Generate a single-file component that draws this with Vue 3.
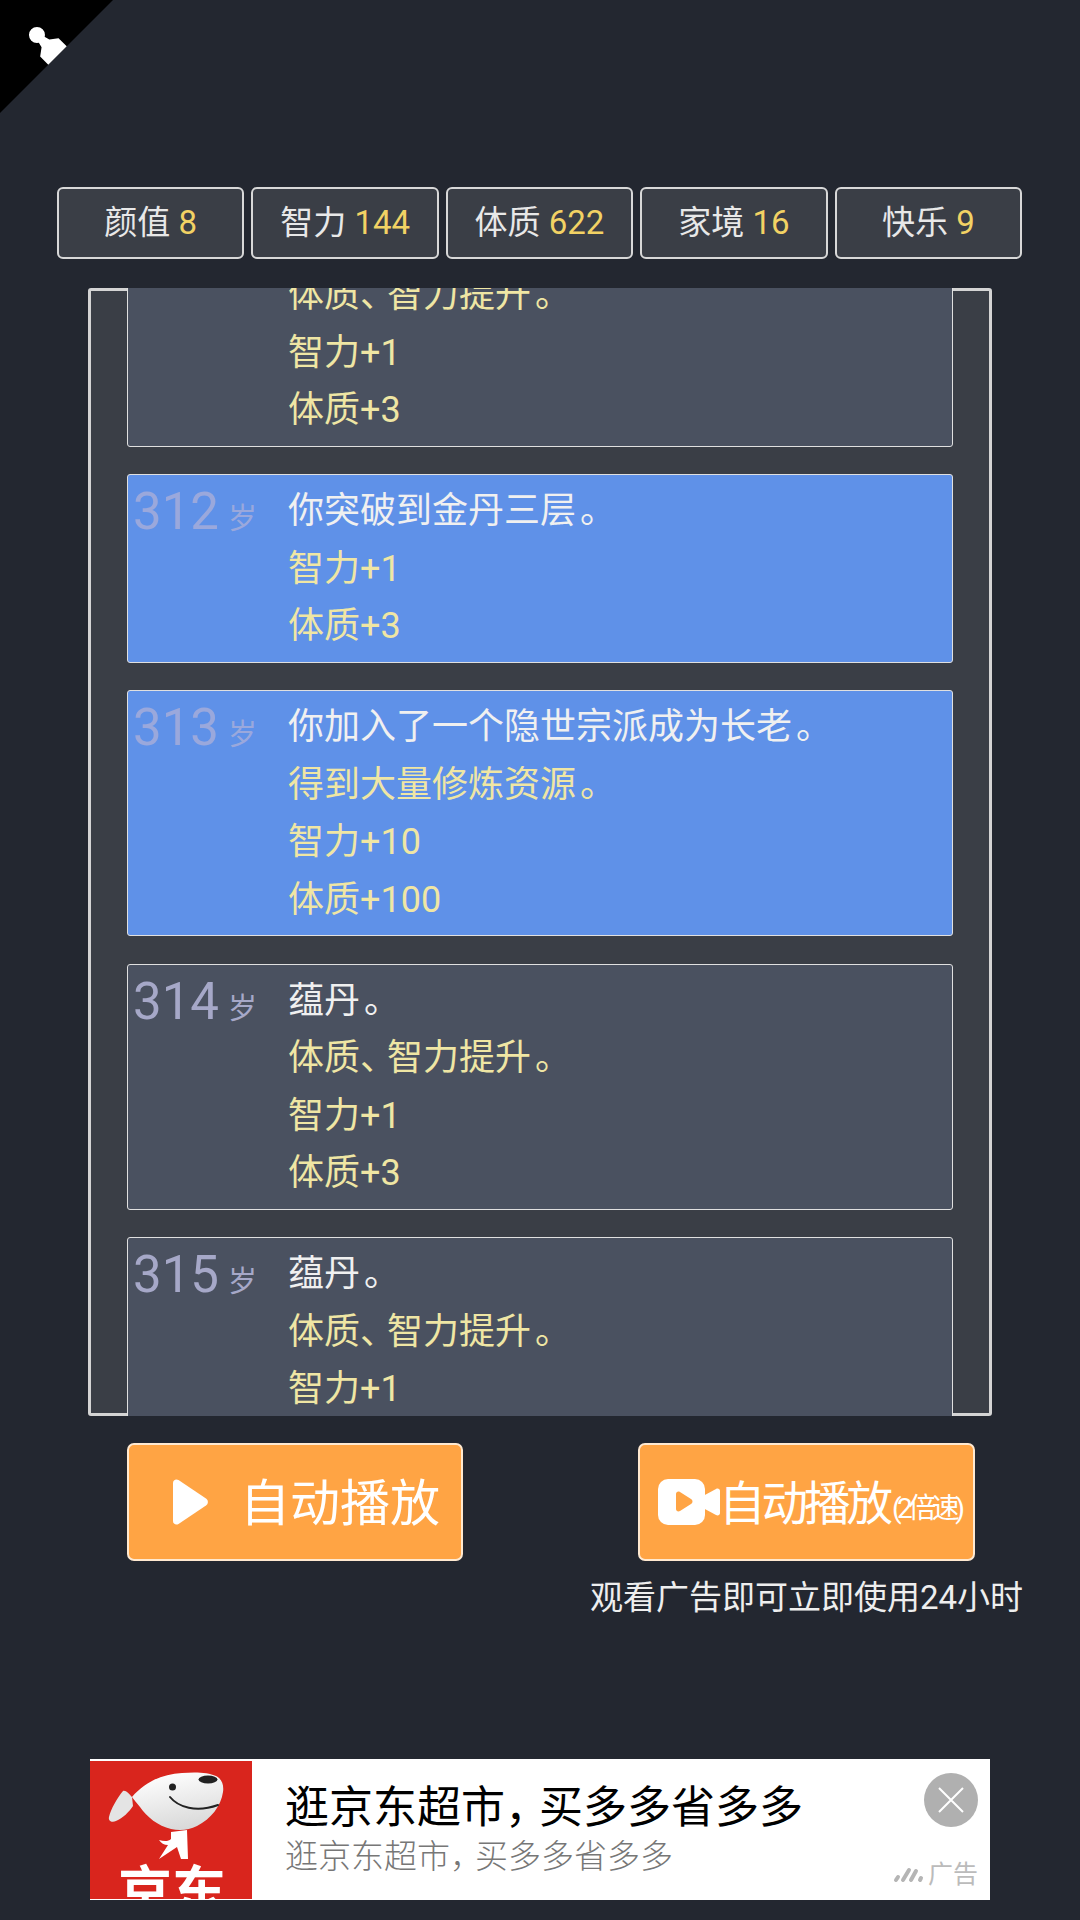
<template>
  <div class="page">
    <div class="corner">
      <svg class="pawn" width="50" height="50" viewBox="0 0 50 50">
        <g transform="rotate(-45 25 25)" fill="#fff">
          <circle cx="25" cy="8" r="8" />
          <path d="M21 14h8l1.500 6 7.500 5.500V37a1 1 0 0 1-1 1H13a1 1 0 0 1-1-1V25.500l7.500-5.500z" />
        </g>
      </svg>
    </div>

    <div class="stats">
      <div v-for="stat in stats" :key="stat.name" class="stat">
        {{ stat.name }} <span class="stat-value">{{ stat.value }}</span>
      </div>
    </div>

    <div class="panel">
      <div class="scroller">
        <div class="list">
          <div v-for="item in events" :key="item.age" class="card" :class="{ active: item.active }">
            <div class="age"><span class="age-num">{{ item.age }}</span><span class="age-unit">岁</span></div>
            <div class="lines">
              <div class="title">
                <span v-for="(part, i) in splitPunct(item.title)" :key="i" :class="part.cls">{{ part.text }}</span>
              </div>
              <div v-for="line in item.lines" :key="line" class="effect">
                <span v-for="(part, i) in splitPunct(line)" :key="i" :class="part.cls">{{ part.text }}</span>
              </div>
            </div>
          </div>
        </div>
      </div>
    </div>

    <div class="actions">
      <div class="btn btn-play">
        <svg width="38" height="48" viewBox="0 0 38 48">
          <path d="M2 5c0-3 3-4.500 5.500-3L35 20.500c2.500 1.700 2.500 5.300 0 7L7.500 46C5 47.500 2 46 2 43z" fill="#fff" />
        </svg>
        <span class="play-text">自动播放</span>
      </div>
      <div class="btn btn-video">
        <svg width="62" height="46" viewBox="0 0 62 46">
          <rect x="0" y="0" width="47" height="46" rx="10" fill="#fff" />
          <path d="M45 17l13-7c2-1 4 0 4 2v22c0 2-2 3-4 2l-13-7z" fill="#fff" />
          <path d="M18 15c0-2 2-3 4-2l11 7c2 1 2 4 0 5l-11 7c-2 1-4 0-4-2z" fill="#ffa444" />
        </svg>
        <span class="video-text">自动播放</span>
        <span class="speed">(2倍速)</span>
      </div>
    </div>
    <div class="hint">观看广告即可立即使用24小时</div>

    <div class="ad">
      <div class="ad-logo">
        <svg class="dog" width="163" height="110" viewBox="0 0 163 110">
          <defs>
            <linearGradient id="head" x1="0.3" y1="0" x2="0.6" y2="1">
              <stop offset="0" stop-color="#fff" />
              <stop offset="1" stop-color="#d8d8d8" />
            </linearGradient>
          </defs>
          <path d="M33 30c-6 7-12 18-14 26-1 4 3 6 7 4 7-3 13-9 17-15l-1-9c-3-3-6-7-9-6z" fill="#e4e4e4" />
          <path d="M42 36C55 21 72 13 92 12c12-1 26-1 34 3 6 3 8 9 7 16-2 14-12 27-26 34-8 4-17 5-26 3-13-3-24-12-31-22-3-4-6-7-8-10z" fill="url(#head)" />
          <ellipse cx="118" cy="18.500" rx="9.500" ry="4" fill="#222" />
          <circle cx="82.500" cy="26" r="3.500" fill="#222" />
          <path d="M80 36c8 10 26 16 48 8" fill="none" stroke="#222" stroke-width="2" stroke-linecap="round" />
          <path d="M81 71l16-2 1 29h-7l-4-12-18 12 9-14c-4 0-7-2-9-5 4 1 9 2 12-1z" fill="#fff" />
        </svg>
        <div class="logo-text">京东</div>
      </div>
      <div class="ad-copy">
        <div class="ad-title">逛京东超市<span class="comma">，</span>买多多省多多</div>
        <div class="ad-sub">逛京东超市<span class="comma">，</span>买多多省多多</div>
      </div>
      <div class="ad-side">
        <div class="ad-close">
          <svg width="28" height="28" viewBox="0 0 28 28">
            <path d="M2 2l24 24M26 2L2 26" stroke="#fff" stroke-width="2" />
          </svg>
        </div>
        <div class="ad-mark">
          <svg width="32" height="16" viewBox="0 0 32 16">
            <g stroke="#b5b5b5" stroke-width="4" stroke-linecap="round">
              <path d="M3 13l2-3M10 13l6-10M18 13l5-9M27 13l1-2" />
            </g>
          </svg>
          <span>广告</span>
        </div>
      </div>
    </div>
  </div>
</template>

<script setup>
const stats = [
  { name: '颜值', value: 8 },
  { name: '智力', value: 144 },
  { name: '体质', value: 622 },
  { name: '家境', value: 16 },
  { name: '快乐', value: 9 }
]

const events = [
  { age: 311, title: '蕴丹。', lines: ['体质、智力提升。', '智力+1', '体质+3'] },
  { age: 312, title: '你突破到金丹三层。', lines: ['智力+1', '体质+3'], active: true },
  { age: 313, title: '你加入了一个隐世宗派成为长老。', lines: ['得到大量修炼资源。', '智力+10', '体质+100'], active: true },
  { age: 314, title: '蕴丹。', lines: ['体质、智力提升。', '智力+1', '体质+3'] },
  { age: 315, title: '蕴丹。', lines: ['体质、智力提升。', '智力+1', '体质+3'] }
]

// the punctuation sits tighter in the original font
function splitPunct(text) {
  return text.split(/([、。])/).filter(Boolean).map((t) => ({
    text: t,
    cls: t === '、' ? 'dun' : t === '。' ? 'stop' : ''
  }))
}
</script>

<style scoped>
.page {
  position: relative;
  display: flex;
  flex-direction: column;
  width: 1080px;
  height: 1920px;
  overflow: hidden;
  background: #232730;
  font-family: Roboto, "Noto Sans CJK SC", sans-serif;
}

.corner {
  position: absolute;
  left: 0;
  top: 0;
  width: 113px;
  height: 113px;
  background: #000;
  clip-path: polygon(0 0, 100% 0, 0 100%);
}

.pawn {
  position: absolute;
  left: 24px;
  top: 22px;
}

.stats {
  display: flex;
  gap: 7px;
  margin: 187px 58px 0 57px;
}

.stat {
  flex: 1;
  height: 72px;
  box-sizing: border-box;
  border: 2px solid #d8d8d8;
  border-radius: 6px;
  background: #3a3e46;
  color: #e8e8e8;
  font-size: 33px;
  line-height: 68px;
  text-align: center;
}

.stat-value {
  color: #f2d264;
}

.panel {
  box-sizing: border-box;
  height: 1128px;
  margin: 29px 88px 0;
  border: 3px solid #d4d4d4;
  border-radius: 3px;
  background: #3a3e46;
}

.scroller {
  height: 1128px;
  margin: -3px 0;
  padding: 0 36px 0 36px;
  overflow: hidden;
}

.list {
  display: flex;
  flex-direction: column;
  gap: 27.500px;
  margin-top: -87.500px;
}

.card {
  display: flex;
  padding: 8px 0 6px;
  border: 1px solid #e0e0e0;
  border-radius: 3px;
  background: #4a5160;
}

.card.active {
  background: #5f91e8;
}

.age {
  flex: none;
  box-sizing: border-box;
  width: 160px;
  padding-left: 5px;
  color: #a6a8c8;
  line-height: 57.500px;
}

.active .age {
  color: #9aa8dc;
}

.age-num {
  font-size: 51px;
}

.age-unit {
  margin-left: 9px;
  font-size: 29px;
}

.lines {
  font-size: 36px;
  line-height: 57.500px;
}

.title {
  color: #f0f0f0;
}

.effect {
  color: #efe6a4;
}

.dun {
  letter-spacing: -9px;
}

.stop {
  margin-left: 4px;
}

.actions {
  display: flex;
  justify-content: space-between;
  margin: 27px 105px 0 127px;
}

.btn {
  display: flex;
  align-items: center;
  box-sizing: border-box;
  width: 336px;
  height: 118px;
  border: 2px solid #ffe9d0;
  border-radius: 7px;
  background: #ffa444;
  color: #fff;
}

.btn-play {
  gap: 31px;
  padding-left: 42px;
}

.play-text {
  padding-bottom: 6px;
  font-size: 50px;
  white-space: nowrap;
}

.btn-video {
  width: 337px;
  padding-left: 18px;
}

.video-text {
  margin-left: -1px;
  padding-bottom: 6px;
  font-size: 46.500px;
  letter-spacing: -4px;
  white-space: nowrap;
}

.speed {
  margin: 8px 0 0 3px;
  font-size: 28px;
  letter-spacing: -4.500px;
  white-space: nowrap;
}

.hint {
  margin: 14px 57px 0 0;
  color: #eeeeee;
  font-size: 33px;
  line-height: 46px;
  text-align: right;
}

.ad {
  display: flex;
  width: 900px;
  height: 141px;
  margin: auto 0 20px 90px;
  background: #fff;
}

.ad-logo {
  position: relative;
  flex: none;
  width: 162px;
  height: 138px;
  margin-top: 2px;
  overflow: hidden;
  background: #d9251d;
}

.dog {
  display: block;
}

.logo-text {
  position: absolute;
  left: 28px;
  top: 102px;
  color: #fff;
  font-size: 54px;
  font-weight: 700;
  line-height: 60px;
  white-space: nowrap;
}

.ad-copy {
  flex: 1;
  padding: 21px 0 0 33px;
}

.ad-title {
  color: #000;
  font-size: 44px;
  line-height: 56px;
  white-space: nowrap;
}

.ad-sub {
  color: #777;
  font-size: 33px;
  font-weight: 300;
  line-height: 42px;
  white-space: nowrap;
}

.comma {
  letter-spacing: -10px;
}

.ad-sub .comma {
  letter-spacing: -8px;
}

.ad-side {
  flex: none;
  display: flex;
  flex-direction: column;
  align-items: flex-end;
  justify-content: space-between;
  padding: 14px 12px 10px 0;
}

.ad-close {
  display: flex;
  align-items: center;
  justify-content: center;
  width: 54px;
  height: 54px;
  border-radius: 50%;
  background: #b0b0b0;
}

.ad-mark {
  display: flex;
  align-items: center;
  gap: 3px;
  color: #bbb;
  font-size: 25px;
  line-height: 30px;
}
</style>
